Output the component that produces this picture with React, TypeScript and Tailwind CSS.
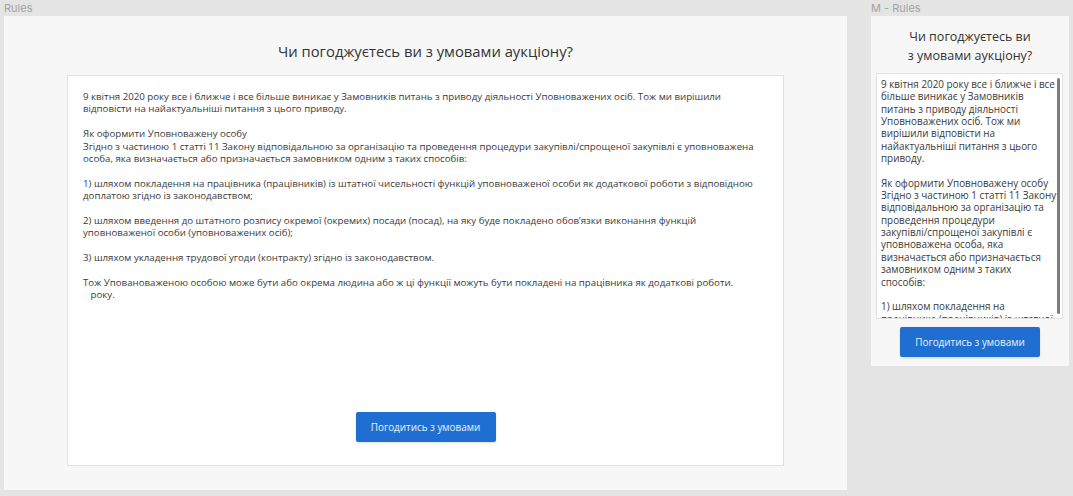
import React from 'react';

// desktop copy, wrapped the way the mockup wraps it ('' = empty line)
const desktopLines = [
  '9 квітня 2020 року все і ближче і все більше виникає у Замовників питань з приводу діяльності Уповноважених осіб. Тож ми вирішили',
  'відповісти на найактуальніші питання з цього приводу.',
  '',
  'Як оформити Уповноважену особу',
  'Згідно з частиною 1 статті 11 Закону відповідальною за організацію та проведення процедури закупівлі/спрощеної закупівлі є уповноважена',
  'особа, яка визначається або призначається замовником одним з таких способів:',
  '',
  '1) шляхом покладення на працівника (працівників) із штатної чисельності функцій уповноваженої особи як додаткової роботи з відповідною',
  'доплатою згідно із законодавством;',
  '',
  '2) шляхом введення до штатного розпису окремої (окремих) посади (посад), на яку буде покладено обов’язки виконання функцій',
  'уповноваженої особи (уповноважених осіб);',
  '',
  '3) шляхом укладення трудової угоди (контракту) згідно із законодавством.',
  '',
  'Тож Уповановаженою особою може бути або окрема людина або ж ці функції можуть бути покладені на працівника як додаткові роботи.',
  '   року.',
];

// mobile copy, same text in a narrow scrolling box
const mobileLines = [
  '9 квітня 2020 року все і ближче і все',
  'більше виникає у Замовників',
  'питань з приводу діяльності',
  'Уповноважених осіб. Тож ми',
  'вирішили відповісти на',
  'найактуальніші питання з цього',
  'приводу.',
  '',
  'Як оформити Уповноважену особу',
  'Згідно з частиною 1 статті 11 Закону',
  'відповідальною за організацію та',
  'проведення процедури',
  'закупівлі/спрощеної закупівлі є',
  'уповноважена особа, яка',
  'визначається або призначається',
  'замовником одним з таких',
  'способів:',
  '',
  '1) шляхом покладення на',
  'працівника (працівників) із штатної',
];

const AgreeButton: React.FC = () => (
  <button className="h-[30px] w-[140px] rounded-[2px] bg-[#1f6fd2] text-[9.9px] text-white/90 shadow-sm">
    Погодитись з умовами
  </button>
);

const App: React.FC = () => {
  return (
    <div
      className="flex h-[496px] w-[1073px] gap-[24px] bg-[#e4e4e4] pl-[4px] text-[#333]"
      style={{ fontFamily: '"Open Sans", "Noto Sans", sans-serif' }}
    >
      {/* desktop frame */}
      <div className="flex w-[843px] flex-col">
        <div className="h-[16px] text-[11px] leading-[16px] text-[#a3a3a3]" style={{ fontFamily: 'Inter, sans-serif' }}>
          Rules
        </div>
        <div className="flex h-[474px] flex-col bg-[#f7f7f7] pt-[24px] pb-[24px]">
          <h1 className="text-center text-[14.8px] leading-[22px] text-[#333]">Чи погоджуєтесь ви з умовами аукціону?</h1>
          <div className="mx-[63px] mt-[13px] flex flex-1 flex-col border border-[#e2e2e2] bg-white px-[15px] pt-[15px] pb-[23px]">
            <div className="whitespace-pre text-[9.7px] leading-[12.4px] text-[#3a3a3a]">
              {desktopLines.map((line, i) => (
                <p key={i} className="h-[12.4px]">
                  {line}
                </p>
              ))}
            </div>
            <div className="mt-auto flex justify-center">
              <AgreeButton />
            </div>
          </div>
        </div>
      </div>

      {/* mobile frame */}
      <div className="flex w-[198px] flex-col">
        <div className="h-[16px] text-[11px] leading-[16px] text-[#a3a3a3]" style={{ fontFamily: 'Inter, sans-serif' }}>
          M - Rules
        </div>
        <div className="flex h-[350px] flex-col bg-[#f7f7f7] pt-[11px] pb-[9px]">
          <h2 className="text-center text-[12.5px] leading-[19px] text-[#333]">
            Чи погоджуєтесь ви
            <br />з умовами аукціону?
          </h2>
          <div className="relative mt-[8px] ml-[5px] mr-[6px] h-[246px] overflow-hidden border border-[#e2e2e2] bg-white pl-[4px] pr-[3px] pt-[4px]">
            <div className="whitespace-pre text-[9.9px] leading-[12.35px] text-[#3a3a3a]">
              {mobileLines.map((line, i) => (
                <p key={i} className="h-[12.35px]">
                  {line}
                </p>
              ))}
            </div>
            <div className="absolute top-[4px] right-[2px] h-[236px] w-[3px] rounded-full bg-[#7d7d7d]" />
          </div>
          <div className="mt-[8px] flex justify-center">
            <AgreeButton />
          </div>
        </div>
      </div>
    </div>
  );
};

export default App;
